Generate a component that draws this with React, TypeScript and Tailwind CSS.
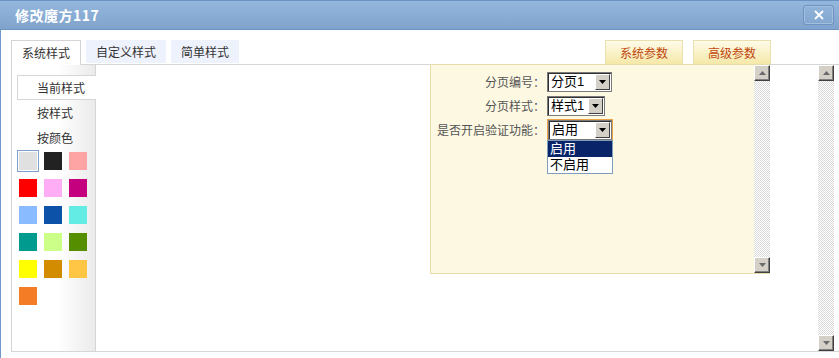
import React from "react";

const FONT = { fontFamily: '"Noto Sans CJK SC", "Noto Sans", "Liberation Sans", sans-serif' };
const TIGHT = { fontFamily: '"Liberation Sans", "Noto Sans CJK SC", sans-serif' };

function Tri({ up }: { up?: boolean }) {
  return (
    <svg width="7" height="4" viewBox="0 0 7 4" className="block">
      {up ? <polygon points="0,4 7,4 3.5,0" fill="#6a6a6a" /> : <polygon points="0,0 7,0 3.5,4" fill="#6a6a6a" />}
    </svg>
  );
}

function ScrollBtn({ up }: { up?: boolean }) {
  return (
    <div className="h-[16px] w-[16px] shrink-0 bg-[#d4d0c8] border border-t-white border-l-white border-r-[#404040] border-b-[#404040] shadow-[inset_-1px_-1px_0_#808080] flex items-center justify-center">
      <Tri up={up} />
    </div>
  );
}

function Scrollbar() {
  return (
    <div className="w-[16px] h-full flex flex-col shrink-0">
      <ScrollBtn up />
      <div className="flex-1 bg-[repeating-conic-gradient(#dadada_0%_25%,#ffffff_0%_50%)] bg-[length:2px_2px]" />
      <ScrollBtn />
    </div>
  );
}

function SelBtn() {
  return (
    <div className="absolute right-[1px] top-[1px] bottom-[1px] w-[15px] bg-[#d4d0c8] border border-t-white border-l-white border-r-[#404040] border-b-[#404040] flex items-center justify-center">
      <svg width="7" height="4" viewBox="0 0 7 4" className="block">
        <polygon points="0,0 7,0 3.5,4" fill="#000" />
      </svg>
    </div>
  );
}

function Select({ text, w, focus }: { text: string; w: string; focus?: boolean }) {
  return (
    <div
      className={
        "relative h-[20px] bg-white border border-[#7a7a7a] shadow-[inset_1px_1px_0_#303030] text-[13px] leading-[18px] text-black pl-[3px] " +
        w +
        (focus ? " ring-1 ring-[#eba548]" : "")
      }
      style={TIGHT}
    >
      {text}
      <SelBtn />
    </div>
  );
}

const swatches = [
  "#e0e0e0", "#222222", "#ffa4a4",
  "#ff0000", "#ffadf5", "#c5007f",
  "#88bbff", "#0b52a8", "#62ece3",
  "#009a8e", "#ccff88", "#558f00",
  "#ffff00", "#d38c00", "#ffc545",
  "#f47c24",
];

export default function App() {
  return (
    <div className="w-[839px] h-[358px] bg-white overflow-hidden flex flex-col" style={FONT}>
      {/* Title bar */}
      <div className="h-[30px] shrink-0 flex items-center justify-between border-t border-b border-t-[#6a93c2] border-b-[#6d95c2] bg-gradient-to-b from-[#94b7dd] to-[#7fa3cc] pl-[15px] pr-[5px]">
        <div className="text-white font-bold text-[14px] leading-none tracking-[0.5px]">修改魔方117</div>
        <div className="w-[31px] h-[20px] rounded-[3px] border border-[#6f93bf] shadow-[inset_0_0_0_1px_#a3bfe0] flex items-center justify-center">
          <svg width="10" height="10" viewBox="0 0 10 10">
            <path d="M1 1 L9 9 M9 1 L1 9" stroke="#fff" strokeWidth="1.8" />
          </svg>
        </div>
      </div>

      {/* Body */}
      <div className="flex-1 border-l border-[#6f9acb] pl-[10px] pt-[10px] flex flex-col">
        {/* Tab row */}
        <div className="h-[24px] flex items-start text-[12px] leading-none text-[#333]">
          <div className="relative z-10 h-[25px] w-[70px] border border-b-0 border-[#d4d4d4] bg-white flex items-center justify-center">
            系统样式
          </div>
          <div className="ml-[5px] h-[23px] w-[80px] bg-[#eef2fc] flex items-center justify-center">自定义样式</div>
          <div className="ml-[5px] h-[23px] w-[68px] bg-[#eef2fc] flex items-center justify-center">简单样式</div>
          <div className="ml-auto h-[24px] w-[78px] border border-b-0 border-[#e9dfae] bg-gradient-to-b from-[#fefbe8] to-[#f5e8a8] text-[#c0470e] flex items-center justify-center">
            系统参数
          </div>
          <div className="ml-[10px] mr-[68px] h-[24px] w-[78px] border border-b-0 border-[#e9dfae] bg-gradient-to-b from-[#fefbe8] to-[#f5e8a8] text-[#c0470e] flex items-center justify-center">
            高级参数
          </div>
        </div>

        {/* Content box */}
        <div className="h-[288px] border-t border-l border-b border-[#d6d6d6] flex">
          {/* Left panel */}
          <div className="w-[84px] shrink-0 border-r border-[#d6d6d6] bg-[linear-gradient(to_right,#ffffff_0%,#ffffff_55%,#ebebeb_100%)] text-[12px] leading-none text-[#333]">
            <div className="mt-[10px] ml-[5px] -mr-px h-[25px] border border-r-0 border-[#d6d6d6] bg-white pl-[19px] flex items-center">
              当前样式
            </div>
            <div className="h-[25px] pl-[25px] flex items-center">按样式</div>
            <div className="h-[25px] pl-[25px] flex items-center">按颜色</div>
            <div className="ml-[5px] grid grid-cols-[repeat(3,22px)] gap-x-[3px] gap-y-[5px]">
              {swatches.map((c, i) => (
                <div
                  key={i}
                  className={
                    "w-[22px] h-[22px] flex items-center justify-center " +
                    (i === 0 ? "border border-[#7f9fcf]" : "")
                  }
                >
                  <div className="w-[18px] h-[18px]" style={{ backgroundColor: c }} />
                </div>
              ))}
            </div>
          </div>

          {/* Main area */}
          <div className="flex-1">
            <div className="ml-[334px] -mt-px w-[340px] h-[210px] border-l border-t border-b border-[#e6dcae] bg-[#fcf8e2] flex">
              <div className="flex-1 pt-[5px] text-[12px] leading-none">
                <div className="h-[24px] flex items-center">
                  <div className="w-[114px] text-right text-[#555]">分页编号：</div>
                  <div className="ml-[2px]">
                    <Select text="分页1" w="w-[65px]" />
                  </div>
                </div>
                <div className="h-[24px] flex items-center">
                  <div className="w-[114px] text-right text-[#555]">分页样式：</div>
                  <div className="ml-[2px]">
                    <Select text="样式1" w="w-[58px]" />
                  </div>
                </div>
                <div className="h-[24px] flex items-center">
                  <div className="w-[114px] text-right text-[#555]">是否开启验证功能：</div>
                  <div className="ml-[3px] relative">
                    <Select text="启用" w="w-[64px]" focus />
                    <div
                      className="absolute left-[-1px] top-[20px] w-[66px] h-[34px] border border-[#7f9db9] bg-white text-[13px] leading-[16px] z-20"
                      style={TIGHT}
                    >
                      <div className="h-[16px] bg-[#0a246a] text-white pl-[2px]">启用</div>
                      <div className="h-[16px] text-black pl-[2px]">不启用</div>
                    </div>
                  </div>
                </div>
              </div>
              <Scrollbar />
            </div>
          </div>

          {/* Outer scrollbar */}
          <div className="mr-[5px] h-full">
            <Scrollbar />
          </div>
        </div>
      </div>
    </div>
  );
}
